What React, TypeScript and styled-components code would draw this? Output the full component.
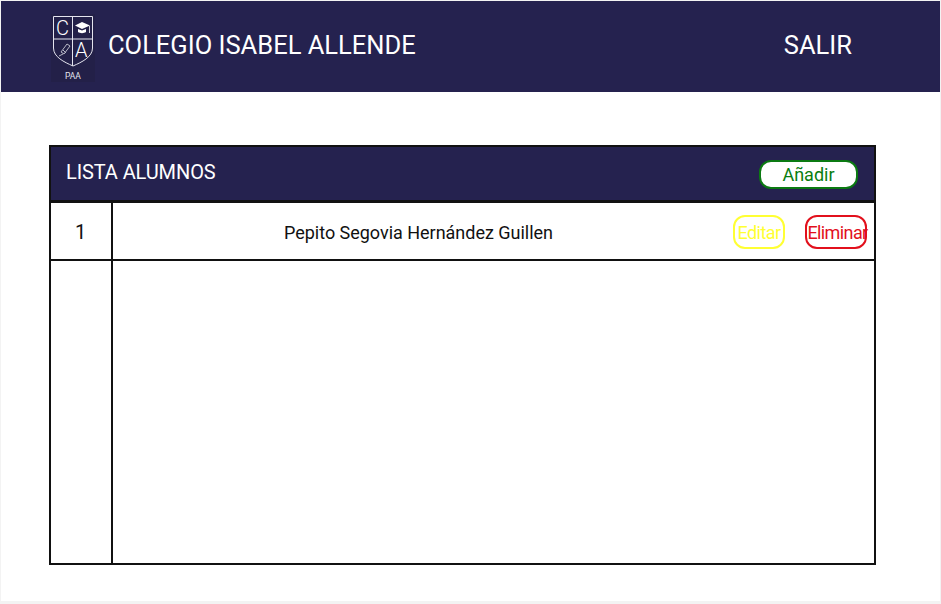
import React from "react";
import styled, { createGlobalStyle } from "styled-components";

const GlobalStyle = createGlobalStyle`
  html, body {
    margin: 0;
    padding: 0;
    background: #f3f3f3;
    font-family: Roboto, "Liberation Sans", sans-serif;
  }
`;

const Page = styled.div`
  width: 939px;
  height: 600px;
  margin: 1px 0 0 1px;
  background: #ffffff;
`;

const Header = styled.header`
  height: 91px;
  box-sizing: border-box;
  background: #25224f;
  display: flex;
  align-items: center;
  padding: 0 88px 3px 50px;
  color: #ffffff;
`;

const LogoBox = styled.div`
  width: 44px;
  height: 68px;
  margin-top: 5px;
  margin-right: 13px;
  flex-shrink: 0;
`;

const SchoolName = styled.h1`
  margin: 0;
  font-size: 25.5px;
  font-weight: 400;
  flex: 1;
`;

const Logout = styled.a`
  font-size: 25.5px;
  font-weight: 400;
`;

const Table = styled.section`
  width: 827px;
  height: 420px;
  box-sizing: border-box;
  margin: 53px 0 0 48px;
  border: 2px solid #111111;
  display: flex;
  flex-direction: column;
`;

const TableHeader = styled.div`
  height: 56px;
  box-sizing: border-box;
  background: #25224f;
  border-bottom: 3px solid #111111;
  display: flex;
  align-items: center;
  justify-content: space-between;
  padding: 0 16px 4px 15px;
  color: #ffffff;
`;

const TableTitle = styled.h2`
  margin: 0;
  font-size: 20px;
  font-weight: 400;
  letter-spacing: -0.1px;
`;

const AddButton = styled.button`
  width: 99px;
  height: 29px;
  box-sizing: border-box;
  margin-top: 5px;
  padding: 0;
  border: 2px solid #0b7a12;
  border-radius: 12px;
  background: #ffffff;
  color: #0a7d10;
  font-family: inherit;
  font-size: 18px;
`;

const Row = styled.div<{ $grow?: boolean }>`
  display: flex;
  box-sizing: border-box;
  ${({ $grow }) => ($grow ? "flex: 1;" : "height: 58px; border-bottom: 2px solid #111111;")}
`;

const IndexCell = styled.div`
  width: 59px;
  flex-shrink: 0;
  padding: 2px 1px 0 0;
  border-right: 2px solid #111111;
  display: flex;
  align-items: center;
  justify-content: center;
  font-size: 20px;
  color: #111111;
`;

const NameCell = styled.div`
  flex: 1;
  display: flex;
  align-items: center;
  padding: 2px 0 0 171px;
  font-size: 18px;
  letter-spacing: -0.02px;
  color: #111111;
`;

const Actions = styled.div`
  display: flex;
  align-items: center;
  gap: 20px;
  padding: 2px 7px 0 0;
`;

const ActionButton = styled.button<{ $color: string; $width: number; $shift?: number }>`
  width: ${({ $width }) => $width}px;
  height: 34px;
  box-sizing: border-box;
  padding: 0 0 0 ${({ $shift }) => $shift ?? 0}px;
  border: 2px solid ${({ $color }) => $color};
  border-radius: 12px;
  background: #ffffff;
  color: ${({ $color }) => $color};
  font-family: inherit;
  font-size: 18px;
  letter-spacing: -0.6px;
  white-space: nowrap;
  display: flex;
  align-items: center;
  justify-content: center;
`;

const Logo = () => (
  <svg width="44" height="68" viewBox="0 0 44 68" fill="none">
    <rect width="44" height="68" fill="#232048" />
    <path
      d="M2.5 2.5H41.5V34C41.5 43 31 48 22 52C13 48 2.5 43 2.5 34Z"
      stroke="#e4e4ee"
      strokeWidth="1"
    />
    <path d="M21.5 2.5V52M2.5 25H41.5" stroke="#e4e4ee" strokeWidth="1" />
    <text x="5" y="21" fill="#ffffff" fontFamily="Roboto" fontWeight="300" fontSize="20">
      C
    </text>
    <text x="24" y="43" fill="#ffffff" fontFamily="Roboto" fontWeight="300" fontSize="20">
      A
    </text>
    <path d="M24 11.5L31 8L39 11.5L31 15Z" fill="#ffffff" />
    <path d="M27 15V18C29 19.5 33 19.5 35 18V15L31 16.5Z" fill="#ffffff" />
    <path d="M38.5 12V19" stroke="#ffffff" strokeWidth="0.8" />
    <path d="M10 38L16 30L19 32L13 40Z" stroke="#b8b8c6" strokeWidth="1" />
    <path d="M8 42L12 40M12 36L15 39" stroke="#b8b8c6" strokeWidth="1" />
    <text x="14" y="65" fill="#e4e4ee" fontFamily="Roboto" fontSize="8.5">
      PAA
    </text>
  </svg>
);

const App = () => {
  return (
    <>
      <GlobalStyle />
      <Page>
        <Header>
          <LogoBox>
            <Logo />
          </LogoBox>
          <SchoolName>COLEGIO ISABEL ALLENDE</SchoolName>
          <Logout>SALIR</Logout>
        </Header>
        <Table>
          <TableHeader>
            <TableTitle>LISTA ALUMNOS</TableTitle>
            <AddButton>Añadir</AddButton>
          </TableHeader>
          <Row>
            <IndexCell>1</IndexCell>
            <NameCell>Pepito Segovia Hernández Guillen</NameCell>
            <Actions>
              <ActionButton $color="#ffff33" $width={52}>
                Editar
              </ActionButton>
              <ActionButton $color="#e2101c" $width={62} $shift={3}>
                Eliminar
              </ActionButton>
            </Actions>
          </Row>
          <Row $grow>
            <IndexCell />
          </Row>
        </Table>
      </Page>
    </>
  );
};

export default App;
